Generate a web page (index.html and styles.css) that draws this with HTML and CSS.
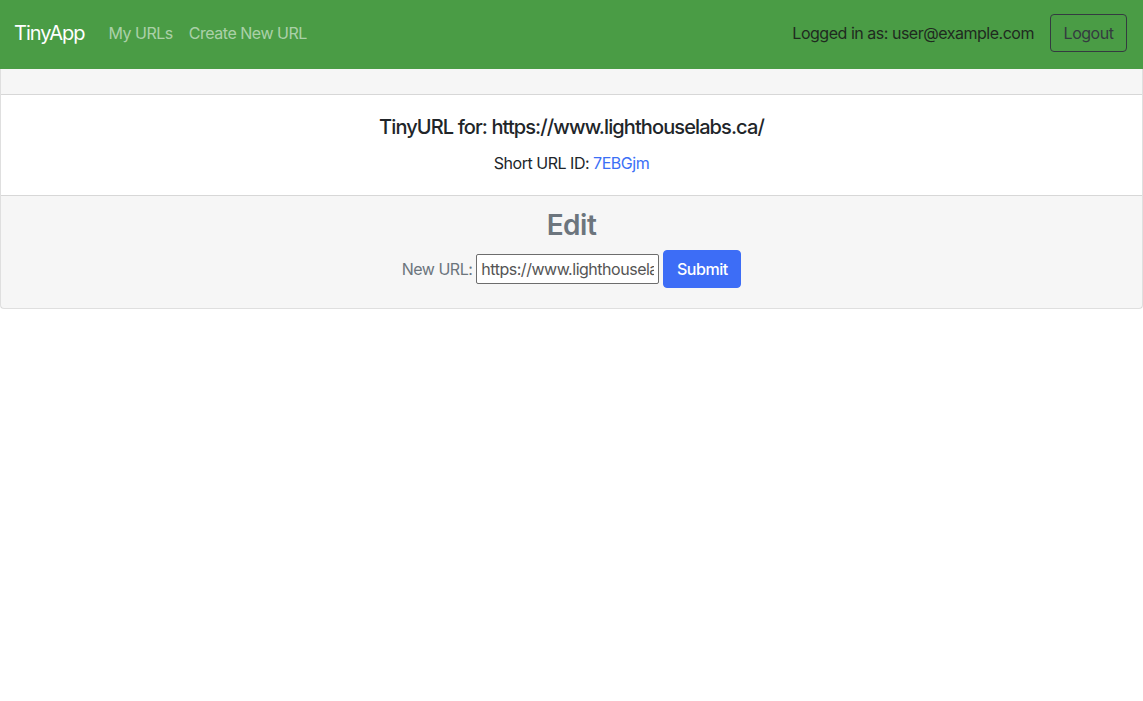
FILE: index.html
```html
<!DOCTYPE html>
<html lang="en">
<head>
<meta charset="utf-8">
<title>TinyApp</title>
<link rel="stylesheet" href="styles.css">
</head>
<body>
<nav class="navbar">
  <div class="nav-left">
    <a class="brand" href="#">TinyApp</a>
    <a class="nav-link" href="#">My URLs</a>
    <a class="nav-link" href="#">Create New URL</a>
  </div>
  <div class="nav-right">
    <span class="user">Logged in as: user@example.com</span>
    <button class="btn-logout" type="button">Logout</button>
  </div>
</nav>
<div class="card">
  <div class="card-header"></div>
  <div class="card-body">
    <h5 class="card-title">TinyURL for: https://www.lighthouselabs.ca/</h5>
    <p class="card-text">Short URL ID: <a class="link" href="#">7EBGjm</a></p>
  </div>
  <div class="card-footer">
    <h3 class="edit-title">Edit</h3>
    <form class="edit-form">
      <label class="form-label" for="longURL">New URL:</label>
      <input class="url-input" id="longURL" type="text" value="https://www.lighthouselabs.ca/">
      <button class="btn-submit" type="button">Submit</button>
    </form>
  </div>
</div>
</body>
</html>
```
FILE: styles.css
```css
* { box-sizing: border-box; }
html, body {
  margin: 0;
  padding: 0;
  background: #fff;
}
body {
  font-family: Inter, "Liberation Sans", sans-serif;
  font-size: 16px;
  line-height: 24px;
  color: #212529;
  letter-spacing: -0.03em;
}
.navbar {
  height: 69px;
  background: #4a9c45;
  display: flex;
  align-items: center;
  justify-content: space-between;
  padding: 0 16px 4px 14px;
}
.nav-left { display: flex; align-items: center; }
.brand {
  color: #fff;
  font-size: 20px;
  letter-spacing: -0.05em;
  text-decoration: none;
  margin-right: 16px;
}
.nav-link {
  color: rgba(255, 255, 255, 0.55);
  text-decoration: none;
  padding: 0 8px;
}
.nav-right { display: flex; align-items: center; gap: 16px; }
.user { color: #1f2a1f; }
.btn-logout {
  font-family: inherit;
  font-size: 16px;
  line-height: 24px;
  letter-spacing: -0.03em;
  color: #343a40;
  background: transparent;
  border: 1px solid #343a40;
  border-radius: 4px;
  padding: 6px 12px;
  height: 38px;
  width: 77px;
}
.card {
  border: 1px solid rgba(0, 0, 0, 0.125);
  border-top: none;
  border-radius: 0 0 4px 4px;
}
.card-header {
  height: 26px;
  background: rgba(0, 0, 0, 0.035);
  border-bottom: 1px solid rgba(0, 0, 0, 0.125);
}
.card-body {
  padding: 20px;
  text-align: center;
}
.card-title {
  margin: 0 0 12px;
  font-size: 20px;
  font-weight: 500;
  line-height: 24px;
  letter-spacing: -0.045em;
}
.card-text { margin: 0; }
.link { color: #3b6ff6; text-decoration: none; }
.card-footer {
  background: rgba(0, 0, 0, 0.035);
  border-top: 1px solid rgba(0, 0, 0, 0.125);
  padding: 12px 20px 20px;
  text-align: center;
  color: #6c757d;
}
.edit-title {
  margin: 0 0 8px;
  font-size: 28px;
  font-weight: 600;
  line-height: 34px;
}
.edit-form {
  display: flex;
  justify-content: center;
  align-items: center;
  height: 38px;
}
.form-label { margin-right: 4px; }
.url-input {
  width: 183px;
  height: 30px;
  border: 1px solid #6d6d6d;
  border-radius: 2px;
  padding: 0 4px;
  font-family: inherit;
  font-size: 16px;
  letter-spacing: -0.03em;
  color: #555;
  background: #fff;
  margin-right: 4px;
}
.btn-submit {
  font-family: inherit;
  font-size: 16px;
  font-weight: 500;
  line-height: 24px;
  letter-spacing: -0.03em;
  color: #fff;
  background: #3d6df6;
  border: 1px solid #3d6df6;
  border-radius: 4px;
  height: 38px;
  width: 78px;
  padding: 6px 12px;
}
```
